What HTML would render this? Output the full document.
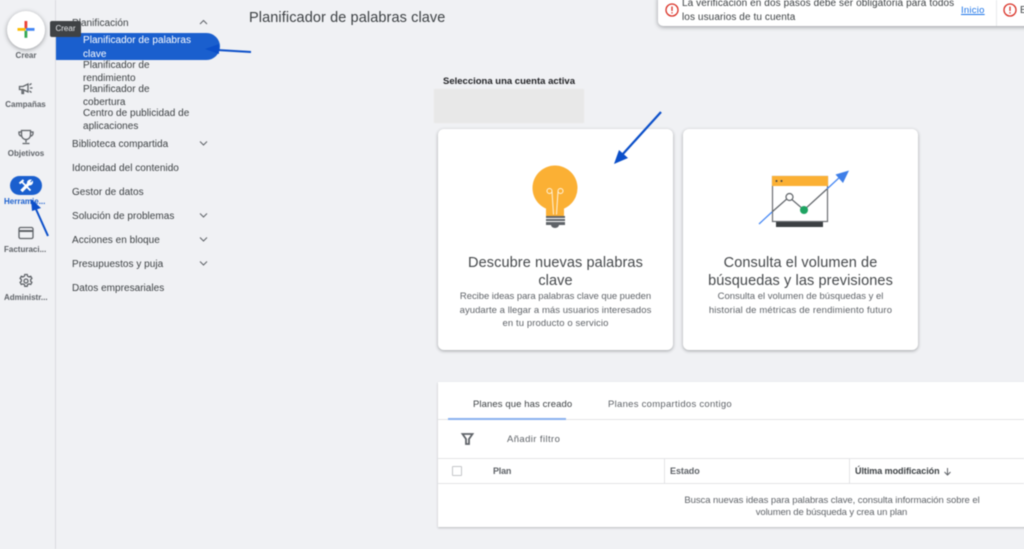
<!DOCTYPE html>
<html lang="es"><head><meta charset="utf-8"><title>Planificador de palabras clave</title>
<style>
*{box-sizing:border-box}
html,body{margin:0;padding:0}
body{width:1024px;height:549px;overflow:hidden;position:relative;background:#f0f1f4;font-family:"Liberation Sans",sans-serif;color:#3c4043;filter:blur(.4px)}
.t{position:absolute;white-space:nowrap;font-size:9.5px;line-height:12px;letter-spacing:.25px;color:#3c4043}
.c{transform:translateX(-50%);text-align:center}
.nav{font-size:10px;letter-spacing:.03px}
.side{font-size:8px;letter-spacing:0;color:#5f6368;font-weight:bold}
.card{position:absolute;top:129px;height:221px;background:#fff;border-radius:6px;box-shadow:0 1px 3px rgba(60,64,67,.45)}
.h{font-size:14.5px;line-height:19px;color:#45484b;letter-spacing:.1px}
.d{color:#5f6368;letter-spacing:0}
svg{position:absolute;overflow:visible}
</style></head><body>
<div style="position:absolute;left:55px;top:0;width:1px;height:549px;background:#dadce0"></div>

<!-- create button -->
<div style="position:absolute;left:7px;top:11px;width:38px;height:38px;border-radius:50%;background:#fff;box-shadow:0 1px 4px rgba(60,64,67,.5)"></div>
<svg style="left:0;top:0" width="60" height="60"><rect x="24.500" y="21" width="2.800" height="8" fill="#ea4335"/><rect x="17.500" y="28" width="8" height="2.800" fill="#fbbc04"/><rect x="26" y="28" width="8.500" height="2.800" fill="#4285f4"/><rect x="24.500" y="30.800" width="2.800" height="7" fill="#34a853"/></svg>
<div class="t side c" style="left:26px;top:50px">Crear</div>

<svg style="left:0;top:0" width="56" height="300" fill="none" stroke="#5f6368" stroke-width="1.300">
<path d="M19.500 86.500h3.500l5-2.500v8l-5-2.500h-3.500zM22 90v3.500h1.500V90"/><path d="M30 88h2.500M29.500 85l2-1.500M29.500 91l2 1.500"/>
<path d="M21.500 130.500h9v4.500a4.500 4.500 0 0 1-9 0zM21.500 132h-2.500v1.500a2.500 2.500 0 0 0 2.500 2.500M30.500 132h2.500v1.500a2.500 2.500 0 0 1-2.500 2.500M26 139.500v3M22.500 143.500h7"/>
<rect x="19" y="227.500" width="14" height="11" rx="1.500"/><path d="M19 231h14" stroke-width="2"/>
<circle cx="26" cy="281" r="2"/><path d="M24.800 274.500h2.400l.4 1.700 1.400.7 1.700-.6 1.200 2.100-1.300 1.200v1.600l1.300 1.200-1.200 2.100-1.700-.6-1.400.7-.4 1.700h-2.400l-.4-1.700-1.400-.7-1.700.6-1.200-2.100 1.300-1.200v-1.600l-1.300-1.200 1.200-2.100 1.700.6 1.400-.7z"/>
</svg>
<div class="t side c" style="left:25.500px;top:99px">Campañas</div>
<div class="t side c" style="left:26px;top:148px">Objetivos</div>
<div style="position:absolute;left:10px;top:176px;width:32px;height:19px;border-radius:10px;background:#1a5fce"></div>
<svg style="left:0;top:0" width="56" height="200" fill="none" stroke="#fff" stroke-width="1.800"><path d="M21.500 181.500l9 9"/><path d="M31 180a3 3 0 0 0-3.500 3.500l-6.500 6.500 1.500 1.500 6.500-6.500a3 3 0 0 0 3.500-3.500l-1.500 1.500-1.500-1z" stroke-width="1" fill="#fff"/><path d="M19.500 183.500l4-3.500" stroke-width="2"/></svg>
<div class="t side" style="left:4px;top:196px;color:#1a5fce">Herramie...</div>
<div class="t side" style="left:4px;top:244px">Facturaci...</div>
<div class="t side" style="left:4px;top:292px">Administr...</div>

<!-- nav -->
<div style="position:absolute;left:56px;top:33px;width:164px;height:27px;background:#1a5fce;border-radius:0 14px 14px 0"></div>
<div class="t nav" style="left:72px;top:18px">Planificación</div>
<div class="t nav" style="left:83px;top:35px;color:#fff">Planificador de palabras</div>
<div class="t nav" style="left:83px;top:49px;color:#fff">clave</div>
<div class="t nav" style="left:83px;top:60px">Planificador de</div>
<div class="t nav" style="left:83px;top:73px">rendimiento</div>
<div class="t nav" style="left:83px;top:84px">Planificador de</div>
<div class="t nav" style="left:83px;top:97px">cobertura</div>
<div class="t nav" style="left:83px;top:108px">Centro de publicidad de</div>
<div class="t nav" style="left:83px;top:121px">aplicaciones</div>
<div class="t nav" style="left:72px;top:139px">Biblioteca compartida</div>
<div class="t nav" style="left:72px;top:163px">Idoneidad del contenido</div>
<div class="t nav" style="left:72px;top:187px">Gestor de datos</div>
<div class="t nav" style="left:72px;top:211px">Solución de problemas</div>
<div class="t nav" style="left:72px;top:235px">Acciones en bloque</div>
<div class="t nav" style="left:72px;top:259px">Presupuestos y puja</div>
<div class="t nav" style="left:72px;top:283px">Datos empresariales</div>
<svg style="left:0;top:0" width="220" height="280" fill="none" stroke="#5f6368" stroke-width="1"><path d="M200 24l3.500-3.500 3.500 3.500M200 141.500l3.500 3.500 3.500-3.500M200 213.500l3.500 3.500 3.500-3.500M200 237.500l3.500 3.500 3.500-3.500M200 261.500l3.500 3.500 3.500-3.500"/></svg>

<!-- tooltip -->
<div style="position:absolute;left:50px;top:21px;width:31px;height:16px;background:#3f4245;border-radius:2px;color:#e8eaed;font-size:8px;line-height:16px;text-align:center">Crear</div>

<div class="t" style="left:249px;top:9px;font-size:14.500px;line-height:18px;letter-spacing:.1px">Planificador de palabras clave</div>

<!-- notifications -->
<div style="position:absolute;left:658px;top:-6px;width:380px;height:32px;background:#fff;border-radius:5px;box-shadow:0 1px 4px rgba(60,64,67,.5)"></div>
<div style="position:absolute;left:996px;top:0;width:1px;height:26px;background:#e8eaed"></div>
<svg style="left:0;top:0" width="1024" height="30" fill="none" stroke="#d93025" stroke-width="1.300"><circle cx="672" cy="10" r="6"/><path d="M672 6.500v4.500M672 12.300v1.200"/><circle cx="1010" cy="10" r="6"/><path d="M1010 6.500v4.500M1010 12.300v1.200"/></svg>
<div class="t" style="left:682px;top:-2px;font-size:10px;letter-spacing:.09px">La verificación en dos pasos debe ser obligatoria para todos</div>
<div class="t" style="left:682px;top:12px;font-size:10px;letter-spacing:.09px">los usuarios de tu cuenta</div>
<div class="t" style="left:961px;top:5px;color:#1a73e8;text-decoration:underline">Inicio</div>
<div class="t" style="left:1020px;top:5px;font-size:10px">E</div>

<!-- account -->
<div class="t" style="left:443px;top:76px;font-weight:bold;color:#202124;letter-spacing:0;font-size:9.500px">Selecciona una cuenta activa</div>
<div style="position:absolute;left:434px;top:89px;width:150px;height:34px;background:#e8e8e8"></div>

<!-- cards -->
<div class="card" style="left:438px;width:235px"></div>
<div class="card" style="left:683px;width:235px"></div>

<svg style="left:500px;top:100px" width="120" height="140">
<circle cx="55" cy="88" r="22.500" fill="#fbb034"/>
<rect x="46" y="100" width="18" height="17" fill="#fbb034"/>
<g fill="none" stroke="#fff3dd" stroke-width="1"><circle cx="49.500" cy="91" r="2.500"/><circle cx="60.500" cy="91" r="2.500"/><path d="M52 91.500l1.500 23M58 91.500l-1.500 23"/></g>
<rect x="46" y="116" width="19" height="9" fill="#5f6368"/><path d="M46 118.500h19M46 121.500h19" stroke="#fff" stroke-width="1"/><path d="M51 125a4 3 0 0 0 8 0z" fill="#5f6368"/>
</svg>

<svg style="left:740px;top:150px" width="130" height="90" fill="none">
<rect x="32.500" y="26.500" width="55" height="45" fill="#fff" stroke="#6b6e72" stroke-width="1.200"/>
<rect x="32" y="26" width="56" height="10" fill="#fbb034"/>
<circle cx="36.500" cy="31" r="1" fill="#444"/><circle cx="41.500" cy="31" r="1" fill="#444"/>
<rect x="36" y="72" width="47" height="5" fill="#3c4043"/>
<path d="M19 74L32 62M87 39L101 26" stroke="#4285f4" stroke-width="1.200"/>
<path d="M32 62L49 47L64 60L87 39" stroke="#5f6368" stroke-width="1.200"/>
<circle cx="49.500" cy="47" r="3.500" fill="#fff" stroke="#5f6368" stroke-width="1.200"/>
<circle cx="64" cy="60" r="4" fill="#1ea362"/>
<path d="M109 20.500l-13.500 4 7.500 8.500z" fill="#3f7fe8"/>
</svg>

<div class="t h c" style="left:555.500px;top:253.500px">Descubre nuevas palabras</div>
<div class="t h c" style="left:555.500px;top:272px">clave</div>
<div class="t d c" style="left:555.500px;top:291px;letter-spacing:-.05px">Recibe ideas para palabras clave que pueden</div>
<div class="t d c" style="left:555.500px;top:305px;letter-spacing:.05px">ayudarte a llegar a más usuarios interesados</div>
<div class="t d c" style="left:555.500px;top:318px;letter-spacing:.1px">en tu producto o servicio</div>
<div class="t h c" style="left:800.500px;top:253.500px">Consulta el volumen de</div>
<div class="t h c" style="left:800.500px;top:272px">búsquedas y las previsiones</div>
<div class="t d c" style="left:800.500px;top:291px">Consulta el volumen de búsquedas y el</div>
<div class="t d c" style="left:800.500px;top:305px;letter-spacing:.15px">historial de métricas de rendimiento futuro</div>

<!-- table -->
<div style="position:absolute;left:438px;top:382px;width:600px;height:145px;background:#fff;box-shadow:0 1px 2px rgba(60,64,67,.3)"></div>
<div style="position:absolute;left:438px;top:419px;width:586px;height:1px;background:#e3e4e6"></div>
<div style="position:absolute;left:448px;top:418px;width:118px;height:2px;background:#8ab1ee"></div>
<div style="position:absolute;left:438px;top:458px;width:586px;height:1px;background:#e3e4e6"></div>
<div style="position:absolute;left:438px;top:483px;width:586px;height:1px;background:#e3e4e6"></div>
<div style="position:absolute;left:664px;top:459px;width:1px;height:24px;background:#e3e4e6"></div>
<div style="position:absolute;left:849px;top:459px;width:1px;height:24px;background:#e3e4e6"></div>
<div style="position:absolute;left:452px;top:466px;width:10px;height:10px;border:1px solid #c4c6c9;border-radius:1px"></div>
<svg style="left:460px;top:432px" width="16" height="14"><path d="M2.500 2h10L9 7v5H6V7z" fill="none" stroke="#5f6368" stroke-width="1.800"/></svg>
<div class="t" style="left:473px;top:399px;color:#3c4043;letter-spacing:.1px">Planes que has creado</div>
<div class="t" style="left:608px;top:399px;color:#5f6368;letter-spacing:.28px">Planes compartidos contigo</div>
<div class="t" style="left:507px;top:434px;color:#5f6368;letter-spacing:.4px">Añadir filtro</div>
<div class="t" style="left:493px;top:465px;font-weight:bold;color:#5f6368;font-size:9px;letter-spacing:-.2px">Plan</div>
<div class="t" style="left:670px;top:465px;font-weight:bold;color:#5f6368;font-size:9px;letter-spacing:-.05px">Estado</div>
<div class="t" style="left:855px;top:465px;font-weight:bold;color:#3c4043;font-size:9px;letter-spacing:-.05px">Última modificación</div>
<svg style="left:943px;top:467px" width="10" height="10" fill="none" stroke="#5f6368"><path d="M4.500 1v7M1.500 5l3 3 3-3"/></svg>
<div class="t d c" style="left:832px;top:495px;letter-spacing:-.06px">Busca nuevas ideas para palabras clave, consulta información sobre el</div>
<div class="t d c" style="left:831.500px;top:507px;letter-spacing:-.13px">volumen de búsqueda y crea un plan</div>

<!-- annotation arrows -->
<svg style="left:0;top:0" width="1024" height="549" fill="none">
<path d="M251 52L217 50" stroke="#0b4fc9" stroke-width="2"/><path d="M205 49l14-5v10z" fill="#0b4fc9"/>
<path d="M48 236L35 207" stroke="#0b4fc9" stroke-width="2"/><path d="M31 199l10 9-9 3z" fill="#0b4fc9"/>
<path d="M661 112L622 155" stroke="#0b4fc9" stroke-width="2.200"/><path d="M614 164l5-14 9 8z" fill="#0b4fc9"/>
</svg>
</body></html>
